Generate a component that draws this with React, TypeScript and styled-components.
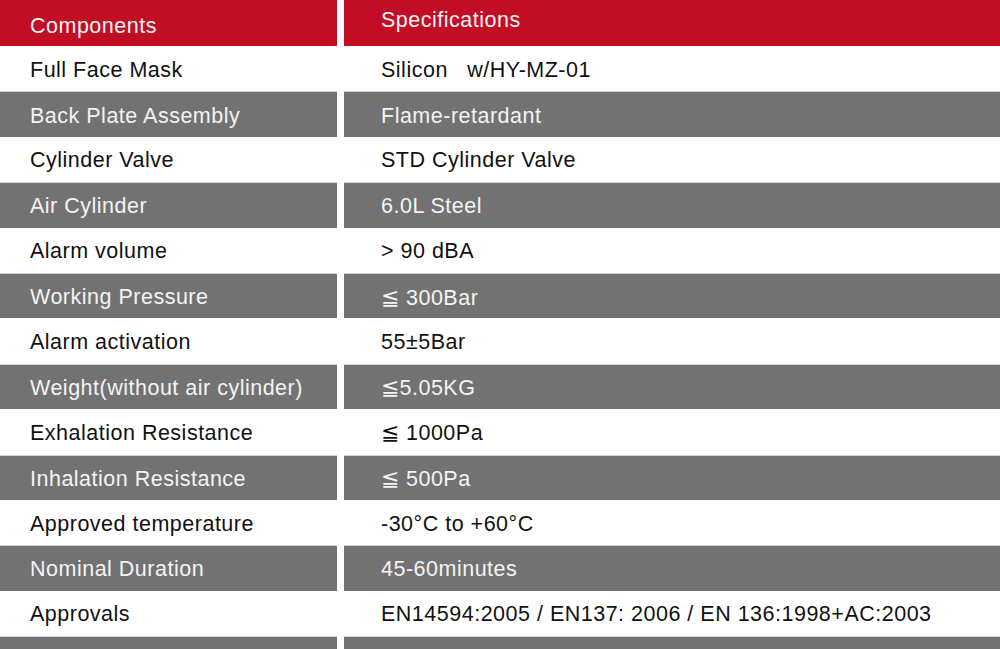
import styled, { createGlobalStyle } from "styled-components";

const GlobalStyle = createGlobalStyle`
  html, body {
    margin: 0;
    padding: 0;
    background: #ffffff;
  }
  body {
    font-family: "Liberation Sans", Arial, sans-serif;
  }
`;

type Tone = "head" | "gray" | "white";

const Table = styled.div`
  width: 1000px;
  height: 649px;
  overflow: hidden;
  display: flex;
  flex-direction: column;
`;

const Row = styled.div<{ $tone: Tone }>`
  display: grid;
  grid-template-columns: 337px 1fr;
  column-gap: 7px;
  flex: none;
  height: ${({ $tone }) => ($tone === "head" ? "46px" : "45.4px")};
  box-sizing: border-box;
`;

const bg = (tone: Tone) =>
  tone === "head" ? "#c30d24" : tone === "gray" ? "#727272" : "#ffffff";

// header spec text sits higher than the rest in the original
const padTop = (tone: Tone, spec?: boolean) =>
  tone === "head" ? (spec ? "0" : "6px") : "3px";

const Cell = styled.div<{ $tone: Tone; $spec?: boolean }>`
  display: flex;
  align-items: center;
  padding-left: ${({ $spec }) => ($spec ? "37px" : "30px")};
  padding-top: ${({ $tone, $spec }) => padTop($tone, $spec)};
  padding-bottom: ${({ $tone, $spec }) => ($tone === "head" && $spec ? "6px" : "0")};
  box-sizing: border-box;
  background: ${({ $tone }) => bg($tone)};
  border-top: ${({ $tone }) => ($tone === "gray" ? "1px solid #d4d4d4" : "none")};
  color: ${({ $tone }) => ($tone === "white" ? "#111111" : "#f4f4f4")};
  font-size: 21.5px;
  letter-spacing: 0.5px;
  white-space: pre;
`;

const rows: [string, string][] = [
  ["Full Face Mask", "Silicon   w/HY-MZ-01"],
  ["Back Plate Assembly", "Flame-retardant"],
  ["Cylinder Valve", "STD Cylinder Valve"],
  ["Air Cylinder", "6.0L Steel"],
  ["Alarm volume", "> 90 dBA"],
  ["Working Pressure", "≦ 300Bar"],
  ["Alarm activation", "55±5Bar"],
  ["Weight(without air cylinder)", "≦5.05KG"],
  ["Exhalation Resistance", "≦ 1000Pa"],
  ["Inhalation Resistance", "≦ 500Pa"],
  ["Approved temperature", "-30°C to +60°C"],
  ["Nominal Duration", "45-60minutes"],
  ["Approvals", "EN14594:2005 / EN137: 2006 / EN 136:1998+AC:2003"],
  ["", ""],
];

export default function App() {
  return (
    <>
      <GlobalStyle />
      <Table>
        <Row $tone="head">
          <Cell $tone="head">Components</Cell>
          <Cell $tone="head" $spec>
            Specifications
          </Cell>
        </Row>
        {rows.map(([name, spec], i) => {
          const tone: Tone = i % 2 === 1 ? "gray" : "white";
          return (
            <Row key={i} $tone={tone}>
              <Cell $tone={tone}>{name}</Cell>
              <Cell $tone={tone} $spec>
                {spec}
              </Cell>
            </Row>
          );
        })}
      </Table>
    </>
  );
}
